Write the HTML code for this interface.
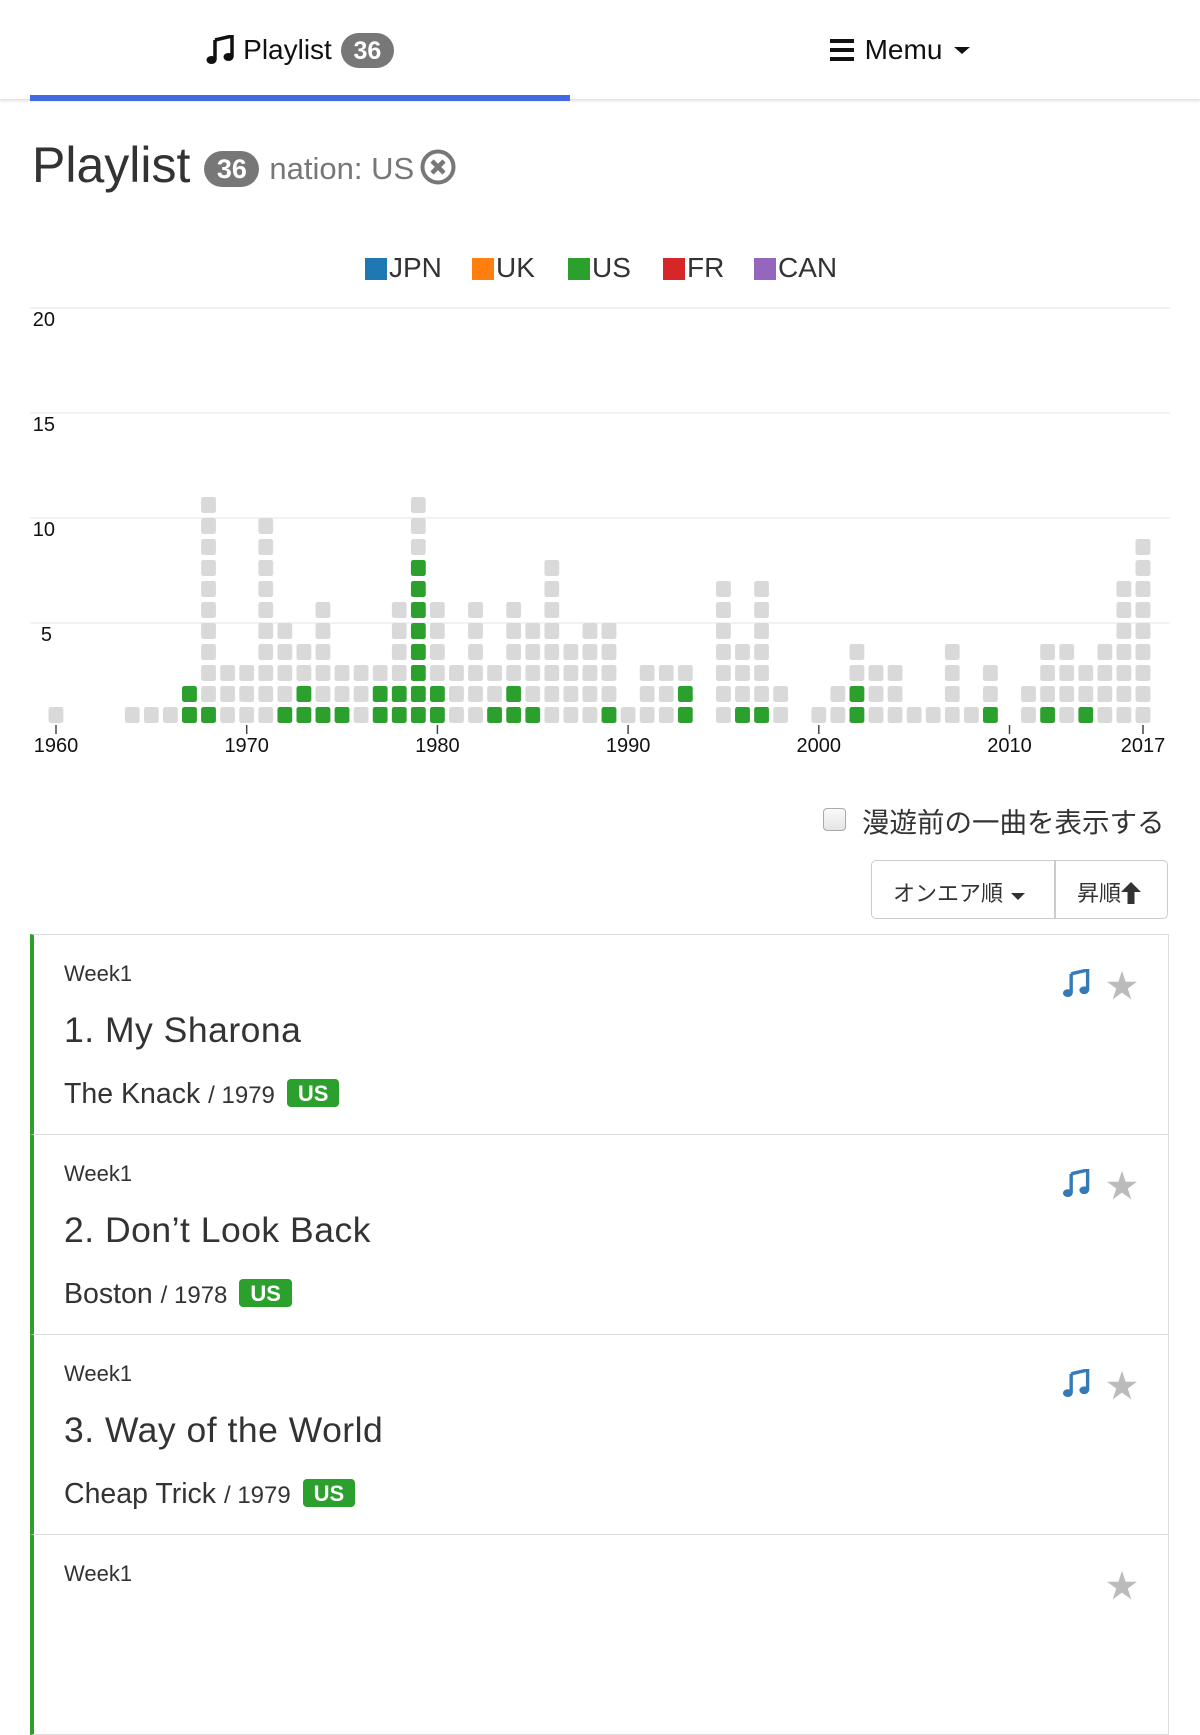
<!DOCTYPE html>
<html><head><meta charset="utf-8">
<style>
*{box-sizing:border-box;margin:0;padding:0}
body{width:1200px;height:1599px;overflow:hidden;background:#fff;font-family:"Liberation Sans","Noto Sans CJK JP",sans-serif;color:#333;position:relative}
.abs{position:absolute}
.hdr{left:0;top:0;width:1200px;height:100px;border-bottom:1px solid #e4e4e4;box-shadow:0 1px 3px rgba(0,0,0,.12)}
.tab{top:0;height:100px;display:flex;align-items:center;justify-content:center;font-size:28px;color:#111}
.badge{display:inline-block;background:#777;color:#fff;font-weight:bold;border-radius:18px;text-align:center}
.item{left:30px;width:1139px;height:201px;border:1px solid #ddd;border-left:4px solid #2ca02c}
.wk{left:30px;top:26px;font-size:22px;color:#333}
.tt{left:30px;top:75px;font-size:35.5px;color:#333;letter-spacing:.5px}
.ar{left:30px;top:143px;font-size:28.5px;color:#333;white-space:nowrap}
.ar small{font-size:24px}
.us{display:inline-block;background:#2ca02c;color:#fff;font-weight:bold;font-size:22px;padding:0 11px;height:28px;line-height:29px;border-radius:4px;vertical-align:2px;margin-left:4px}
.note{right:78px;top:34px}
.star{right:30px;top:26px;font-size:32px;color:#bbb}
</style></head><body>
<div class="abs hdr"></div>
<div class="abs tab" style="left:30px;width:540px">
<svg width="28" height="30" viewBox="0 0 28 30" style="margin-right:9px"><path d="M9 5 L26 1 V22" stroke="#111" stroke-width="3.5" fill="none"/><path d="M9 5 V25" stroke="#111" stroke-width="3.5"/><ellipse cx="5.5" cy="25" rx="5" ry="4" fill="#111"/><ellipse cx="22.5" cy="22" rx="5" ry="4" fill="#111"/></svg>
Playlist <span class="badge" style="font-size:25px;width:53px;height:35px;line-height:36px;margin-left:9px">36</span></div>
<div class="abs" style="left:30px;top:95px;width:540px;height:6px;background:#4169e1"></div>
<div class="abs tab" style="left:630px;width:540px">
<svg width="24" height="24" viewBox="0 0 24 24" style="margin-right:11px"><rect x="0" y="1" width="24" height="4" fill="#111"/><rect x="0" y="10" width="24" height="4" fill="#111"/><rect x="0" y="19" width="24" height="4" fill="#111"/></svg>
Memu <svg width="16" height="10" viewBox="0 0 16 10" style="margin-left:12px"><path d="M0 2 H16 L8 9Z" fill="#111"/></svg></div>

<div class="abs" style="left:32px;top:136px;font-size:50px;color:#333;white-space:nowrap;display:flex;align-items:center">Playlist
<span class="badge" style="font-size:27px;width:55px;height:36px;line-height:37px;margin:8px 10px 0 14px">36</span>
<span style="font-size:31px;color:#777;margin-top:8px">nation: US</span>
<svg width="36" height="36" viewBox="0 0 36 36" style="margin:4px 0 0 6px"><circle cx="18" cy="18" r="15.5" stroke="#777" stroke-width="4" fill="none"/><path d="M12 12 L24 24 M24 12 L12 24" stroke="#777" stroke-width="4.5"/></svg></div>

<div class="abs" style="left:0;top:252px;width:1200px;font-size:28px;color:#333">
<span class="abs" style="left:365px;top:6px;width:22px;height:22px;background:#1f77b4"></span><span class="abs" style="left:389px;top:0">JPN</span>
<span class="abs" style="left:472px;top:6px;width:22px;height:22px;background:#ff7f0e"></span><span class="abs" style="left:496px;top:0">UK</span>
<span class="abs" style="left:568px;top:6px;width:22px;height:22px;background:#2ca02c"></span><span class="abs" style="left:592px;top:0">US</span>
<span class="abs" style="left:663px;top:6px;width:22px;height:22px;background:#d62728"></span><span class="abs" style="left:687px;top:0">FR</span>
<span class="abs" style="left:754px;top:6px;width:22px;height:22px;background:#9467bd"></span><span class="abs" style="left:778px;top:0">CAN</span>
</div>

<svg class="abs" style="left:0;top:0" width="1200" height="780">
<defs>
<pattern id="pg" patternUnits="userSpaceOnUse" x="48.5" y="14" width="19.07" height="21"><rect width="15" height="16" rx="2.5" fill="#d9d9d9"/></pattern>
<pattern id="pn" patternUnits="userSpaceOnUse" x="48.5" y="14" width="19.07" height="21"><rect width="15" height="16" rx="2.5" fill="#2ca02c"/></pattern>
</defs>
<g stroke="#eee" stroke-width="1.5">
<line x1="30" x2="1170" y1="308" y2="308"/><line x1="30" x2="1170" y1="413" y2="413"/><line x1="30" x2="1170" y1="518" y2="518"/><line x1="30" x2="1170" y1="623" y2="623"/>
</g>
<g font-family="Liberation Sans" font-size="20" fill="#111" text-anchor="end">
<text x="55" y="326">20</text><text x="55" y="431">15</text><text x="55" y="536">10</text><text x="52" y="641">5</text>
</g>
<g fill="url(#pg)">
<rect x="48.5" y="707" width="15" height="16"/>
<rect x="124.78" y="707" width="15" height="16"/>
<rect x="143.85" y="707" width="15" height="16"/>
<rect x="162.92" y="707" width="15" height="16"/>
<rect x="181.99" y="686" width="15" height="37"/>
<rect x="201.06" y="497" width="15" height="226"/>
<rect x="220.13" y="665" width="15" height="58"/>
<rect x="239.2" y="665" width="15" height="58"/>
<rect x="258.27" y="518" width="15" height="205"/>
<rect x="277.34" y="623" width="15" height="100"/>
<rect x="296.41" y="644" width="15" height="79"/>
<rect x="315.48" y="602" width="15" height="121"/>
<rect x="334.55" y="665" width="15" height="58"/>
<rect x="353.62" y="665" width="15" height="58"/>
<rect x="372.69" y="665" width="15" height="58"/>
<rect x="391.76" y="602" width="15" height="121"/>
<rect x="410.83" y="497" width="15" height="226"/>
<rect x="429.9" y="602" width="15" height="121"/>
<rect x="448.97" y="665" width="15" height="58"/>
<rect x="468.04" y="602" width="15" height="121"/>
<rect x="487.11" y="665" width="15" height="58"/>
<rect x="506.18" y="602" width="15" height="121"/>
<rect x="525.25" y="623" width="15" height="100"/>
<rect x="544.32" y="560" width="15" height="163"/>
<rect x="563.39" y="644" width="15" height="79"/>
<rect x="582.46" y="623" width="15" height="100"/>
<rect x="601.53" y="623" width="15" height="100"/>
<rect x="620.6" y="707" width="15" height="16"/>
<rect x="639.67" y="665" width="15" height="58"/>
<rect x="658.74" y="665" width="15" height="58"/>
<rect x="677.81" y="665" width="15" height="58"/>
<rect x="715.95" y="581" width="15" height="142"/>
<rect x="735.02" y="644" width="15" height="79"/>
<rect x="754.09" y="581" width="15" height="142"/>
<rect x="773.16" y="686" width="15" height="37"/>
<rect x="811.3" y="707" width="15" height="16"/>
<rect x="830.37" y="686" width="15" height="37"/>
<rect x="849.44" y="644" width="15" height="79"/>
<rect x="868.51" y="665" width="15" height="58"/>
<rect x="887.58" y="665" width="15" height="58"/>
<rect x="906.65" y="707" width="15" height="16"/>
<rect x="925.72" y="707" width="15" height="16"/>
<rect x="944.79" y="644" width="15" height="79"/>
<rect x="963.86" y="707" width="15" height="16"/>
<rect x="982.93" y="665" width="15" height="58"/>
<rect x="1021.07" y="686" width="15" height="37"/>
<rect x="1040.14" y="644" width="15" height="79"/>
<rect x="1059.21" y="644" width="15" height="79"/>
<rect x="1078.28" y="665" width="15" height="58"/>
<rect x="1097.35" y="644" width="15" height="79"/>
<rect x="1116.42" y="581" width="15" height="142"/>
<rect x="1135.49" y="539" width="15" height="184"/>
</g>
<g fill="url(#pn)">
<rect x="181.99" y="686" width="15" height="37"/>
<rect x="201.06" y="707" width="15" height="16"/>
<rect x="277.34" y="707" width="15" height="16"/>
<rect x="296.41" y="686" width="15" height="37"/>
<rect x="315.48" y="707" width="15" height="16"/>
<rect x="334.55" y="707" width="15" height="16"/>
<rect x="372.69" y="686" width="15" height="37"/>
<rect x="391.76" y="686" width="15" height="37"/>
<rect x="410.83" y="560" width="15" height="163"/>
<rect x="429.9" y="686" width="15" height="37"/>
<rect x="487.11" y="707" width="15" height="16"/>
<rect x="506.18" y="686" width="15" height="37"/>
<rect x="525.25" y="707" width="15" height="16"/>
<rect x="601.53" y="707" width="15" height="16"/>
<rect x="677.81" y="686" width="15" height="37"/>
<rect x="735.02" y="707" width="15" height="16"/>
<rect x="754.09" y="707" width="15" height="16"/>
<rect x="849.44" y="686" width="15" height="37"/>
<rect x="982.93" y="707" width="15" height="16"/>
<rect x="1040.14" y="707" width="15" height="16"/>
<rect x="1078.28" y="707" width="15" height="16"/>
</g>
<g stroke="#444" stroke-width="1.5">
<line x1="56" x2="56" y1="725" y2="734"/><line x1="246.7" x2="246.7" y1="725" y2="734"/><line x1="437.4" x2="437.4" y1="725" y2="734"/><line x1="628.1" x2="628.1" y1="725" y2="734"/><line x1="818.8" x2="818.8" y1="725" y2="734"/><line x1="1009.5" x2="1009.5" y1="725" y2="734"/><line x1="1143" x2="1143" y1="725" y2="734"/>
</g>
<g font-family="Liberation Sans" font-size="20" fill="#111" text-anchor="middle">
<text x="56" y="752">1960</text><text x="246.7" y="752">1970</text><text x="437.4" y="752">1980</text><text x="628.1" y="752">1990</text><text x="818.8" y="752">2000</text><text x="1009.5" y="752">2010</text><text x="1143" y="752">2017</text>
</g>
</svg>

<div class="abs" style="left:823px;top:808px;width:23px;height:23px;border:1.5px solid #aaa;border-radius:4px;background:linear-gradient(#fafafa,#e4e4e4)"></div>
<div class="abs" style="left:862px;top:800px;font-size:27.5px;color:#333;white-space:nowrap">漫遊前の一曲を表示する</div>

<div class="abs" style="left:871px;top:860px;width:297px;height:59px;border:1.5px solid #ccc;border-radius:5px"></div>
<div class="abs" style="left:1054px;top:860px;width:1.5px;height:59px;background:#ccc"></div>
<div class="abs" style="left:893px;top:876px;font-size:22px;color:#333;white-space:nowrap">オンエア順<svg width="14" height="9" viewBox="0 0 14 9" style="margin-left:8px"><path d="M0 1 H14 L7 8Z" fill="#333"/></svg></div>
<div class="abs" style="left:1077px;top:876px;font-size:22px;color:#333;white-space:nowrap">昇順<svg width="20" height="22" viewBox="0 0 20 22" style="vertical-align:-3px"><path d="M10 0 L20 10 H13.5 V22 H6.5 V10 H0Z" fill="#333"/></svg></div>

<div class="abs item" style="top:934px">
<div class="abs wk">Week1</div><div class="abs tt">1. My Sharona</div>
<div class="abs ar">The Knack <small>/ 1979</small> <span class="us">US</span></div>
<svg class="abs note" width="28" height="29" viewBox="0 0 28 30"><path d="M9 5 L26 1 V22" stroke="#337ab7" stroke-width="3.5" fill="none"/><path d="M9 5 V25" stroke="#337ab7" stroke-width="3.5"/><ellipse cx="5.5" cy="25" rx="5" ry="4" fill="#337ab7"/><ellipse cx="22.5" cy="22" rx="5" ry="4" fill="#337ab7"/></svg>
<div class="abs star">★</div></div>
<div class="abs item" style="top:1134px">
<div class="abs wk">Week1</div><div class="abs tt">2. Don’t Look Back</div>
<div class="abs ar">Boston <small>/ 1978</small> <span class="us">US</span></div>
<svg class="abs note" width="28" height="29" viewBox="0 0 28 30"><path d="M9 5 L26 1 V22" stroke="#337ab7" stroke-width="3.5" fill="none"/><path d="M9 5 V25" stroke="#337ab7" stroke-width="3.5"/><ellipse cx="5.5" cy="25" rx="5" ry="4" fill="#337ab7"/><ellipse cx="22.5" cy="22" rx="5" ry="4" fill="#337ab7"/></svg>
<div class="abs star">★</div></div>
<div class="abs item" style="top:1334px">
<div class="abs wk">Week1</div><div class="abs tt">3. Way of the World</div>
<div class="abs ar">Cheap Trick <small>/ 1979</small> <span class="us">US</span></div>
<svg class="abs note" width="28" height="29" viewBox="0 0 28 30"><path d="M9 5 L26 1 V22" stroke="#337ab7" stroke-width="3.5" fill="none"/><path d="M9 5 V25" stroke="#337ab7" stroke-width="3.5"/><ellipse cx="5.5" cy="25" rx="5" ry="4" fill="#337ab7"/><ellipse cx="22.5" cy="22" rx="5" ry="4" fill="#337ab7"/></svg>
<div class="abs star">★</div></div>
<div class="abs item" style="top:1534px">
<div class="abs wk">Week1</div>
<div class="abs star">★</div></div>
</body></html>
